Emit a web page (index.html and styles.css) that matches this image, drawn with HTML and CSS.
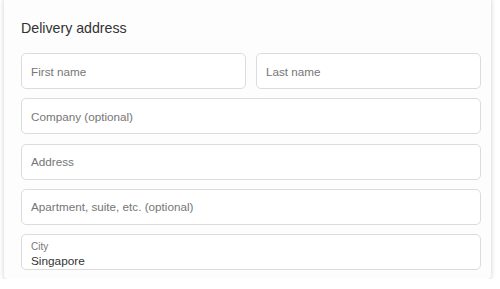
FILE: index.html
```html
<!DOCTYPE html>
<html lang="en">

<head>
    <meta charset="UTF-8">
    <meta name="viewport" content="width=device-width, initial-scale=1.0">
    <title>Delivery address</title>
    <link rel="stylesheet" href="styles.css">
</head>

<body>
    <div class="card">
        <h2>Delivery address</h2>
        <div class="row two">
            <input type="text" placeholder="First name" />
            <input type="text" placeholder="Last name" />
        </div>
        <div class="row">
            <input type="text" placeholder="Company (optional)" />
        </div>
        <div class="row">
            <input type="text" placeholder="Address" />
        </div>
        <div class="row">
            <input type="text" placeholder="Apartment, suite, etc. (optional)" />
        </div>
        <div class="row">
            <div class="field filled">
                <label for="city">City</label>
                <input type="text" id="city" value="Singapore" />
            </div>
        </div>
    </div>
</body>

</html>
```

FILE: styles.css
```css
body {
    background-color: #fff;
    font-family: 'Liberation Sans', Arial, sans-serif;
    margin: 0;
}

.card {
    background-color: #fdfdfd;
    margin: -4px 9px 0 4px;
    padding: 23px 10px 9px 17px;
    border-radius: 4px;
    box-shadow: 0 1px 5px rgba(0, 0, 0, 0.2);
}

h2 {
    margin: 0 0 15px;
    font-size: 14.2px;
    font-weight: 400;
    color: #333;
    line-height: 19px;
}

.row {
    display: flex;
    gap: 10px;
    margin-bottom: 9.25px;
}

.row:last-child {
    margin-bottom: 0;
}

.row input,
.field {
    flex: 1;
    min-width: 0;
}

input[type="text"] {
    height: 36px;
    padding: 0 9px;
    border: 1px solid #dcdcdc;
    border-radius: 5px;
    background-color: #fff;
    font-family: inherit;
    font-size: 11.7px;
    color: #333;
    box-sizing: border-box;
    outline: none;
}

input::placeholder {
    color: #767676;
}

.field {
    display: flex;
    flex-direction: column;
    height: 36px;
    padding: 6px 9px 0;
    border: 1px solid #dcdcdc;
    border-radius: 5px;
    background-color: #fff;
    box-sizing: border-box;
}

.field label {
    font-size: 10px;
    color: #777;
    line-height: 11px;
}

.field input[type="text"] {
    height: 17px;
    padding: 0;
    border: none;
    border-radius: 0;
    font-size: 11.8px;
    background: transparent;
}
```
